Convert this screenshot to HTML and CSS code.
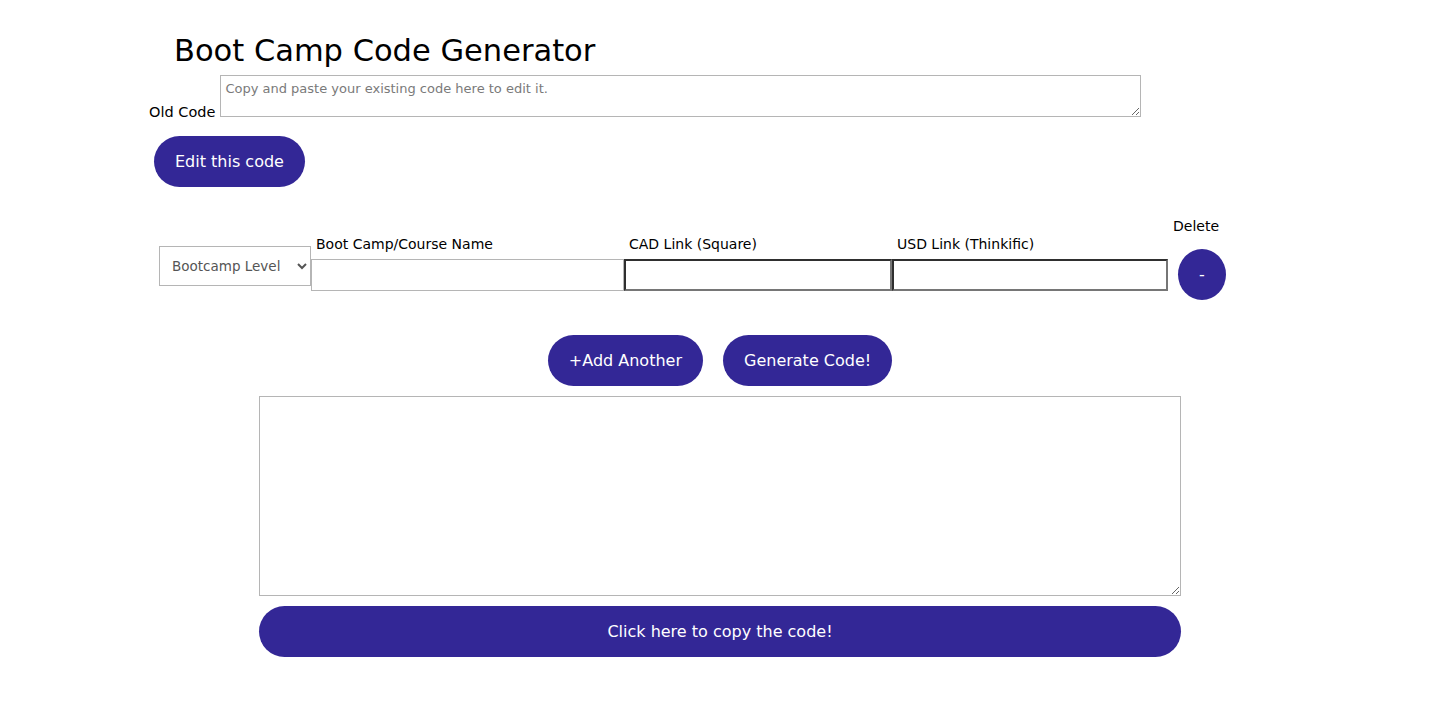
FILE: index.html
```html
<!DOCTYPE html>
<html lang="en">
<head>
<meta charset="utf-8">
<title>Boot Camp Code Generator</title>
<link rel="stylesheet" href="styles.css">
</head>
<body>
<main class="page">
  <h1 class="title">Boot Camp Code Generator</h1>
  <div class="old-row">
    <label class="old-label" for="old">Old Code</label>
    <textarea id="old" class="old-code" placeholder="Copy and paste your existing code here to edit it."></textarea>
  </div>
  <button class="btn edit-btn">Edit this code</button>

  <div class="entry-row">
    <select class="level">
      <option>Bootcamp Level</option>
    </select>
    <div class="field field-name">
      <label class="field-label">Boot Camp/Course Name</label>
      <input class="inp inp-light" type="text">
    </div>
    <div class="field field-cad">
      <label class="field-label">CAD Link (Square)</label>
      <input class="inp inp-dark" type="text">
    </div>
    <div class="field field-usd">
      <label class="field-label">USD Link (Thinkific)</label>
      <input class="inp inp-dark" type="text">
    </div>
    <div class="delete-col">
      <span class="delete-label">Delete</span>
      <button class="btn del-btn">-</button>
    </div>
  </div>

  <div class="actions">
    <button class="btn">+Add Another</button>
    <button class="btn">Generate Code!</button>
  </div>

  <div class="output">
    <textarea class="out-code"></textarea>
    <button class="btn copy-btn">Click here to copy the code!</button>
  </div>
</main>
</body>
</html>
```

FILE: styles.css
```css
* { box-sizing: border-box; }
html, body { margin: 0; padding: 0; background: #fff; }
body {
  font-family: "DejaVu Sans", "Noto Sans", sans-serif;
  color: #000;
}
.page {
  padding-top: 30px;
}
.title {
  margin: 0 0 0 174px;
  font-size: 30.5px;
  font-weight: 400;
  line-height: 42px;
  height: 45px;
}
.old-row {
  display: flex;
  align-items: flex-end;
  margin-left: 149px;
  gap: 5px;
}
.old-label {
  font-size: 14.5px;
  line-height: 16px;
  margin-bottom: -3px;
}
.old-code {
  width: 921px;
  height: 42px;
  border: 1px solid #b5b5b5;
  font-family: inherit;
  font-size: 13px;
  padding: 5px 4px;
  resize: vertical;
  margin: 0;
}
.old-code::placeholder { color: #7a7a7a; }
.btn {
  background: #332796;
  color: #fff;
  border: 0;
  border-radius: 26px;
  height: 51px;
  padding: 0 21px;
  font-family: inherit;
  font-size: 16px;
  cursor: pointer;
}
.edit-btn {
  display: block;
  margin: 19px 0 0 154px;
}
.entry-row {
  display: flex;
  align-items: flex-end;
  margin: 30px 0 0 159px;
  height: 83px;
}
.level {
  width: 152px;
  height: 40px;
  margin-bottom: 14px;
  border: 1px solid #b5b5b5;
  border-radius: 0;
  background: #fff;
  color: #555;
  font-family: inherit;
  font-size: 13.5px;
  padding: 0 6px 0 8px;
}
.field {
  display: flex;
  flex-direction: column;
  margin-bottom: 9px;
}
.field-label {
  font-size: 14px;
  line-height: 18px;
  padding-left: 5px;
  margin-bottom: 6px;
}
.field-name { width: 313px; }
.field-cad { width: 268px; }
.field-usd { width: 276px; }
.inp {
  height: 32px;
  width: 100%;
  margin: 0;
  background: #fff;
  font-family: inherit;
}
.inp-light { border: 1px solid #b5b5b5; }
.inp-dark {
  border: 2px solid;
  border-color: #2f2f2f #767676 #767676 #2f2f2f;
}
.delete-col {
  display: flex;
  flex-direction: column;
  margin-left: 5px;
}
.delete-label {
  font-size: 14px;
  line-height: 18px;
  margin-bottom: 14px;
}
.del-btn {
  width: 48px;
  height: 51px;
  padding: 0;
  border-radius: 50%;
  margin-left: 5px;
}
.actions {
  display: flex;
  justify-content: center;
  gap: 20px;
  margin-top: 35px;
}
.output {
  width: 922px;
  margin: 10px auto 0;
  display: flex;
  flex-direction: column;
  gap: 10px;
}
.out-code {
  width: 922px;
  height: 200px;
  border: 1px solid #b5b5b5;
  margin: 0;
  resize: vertical;
}
.copy-btn {
  width: 922px;
}
```
